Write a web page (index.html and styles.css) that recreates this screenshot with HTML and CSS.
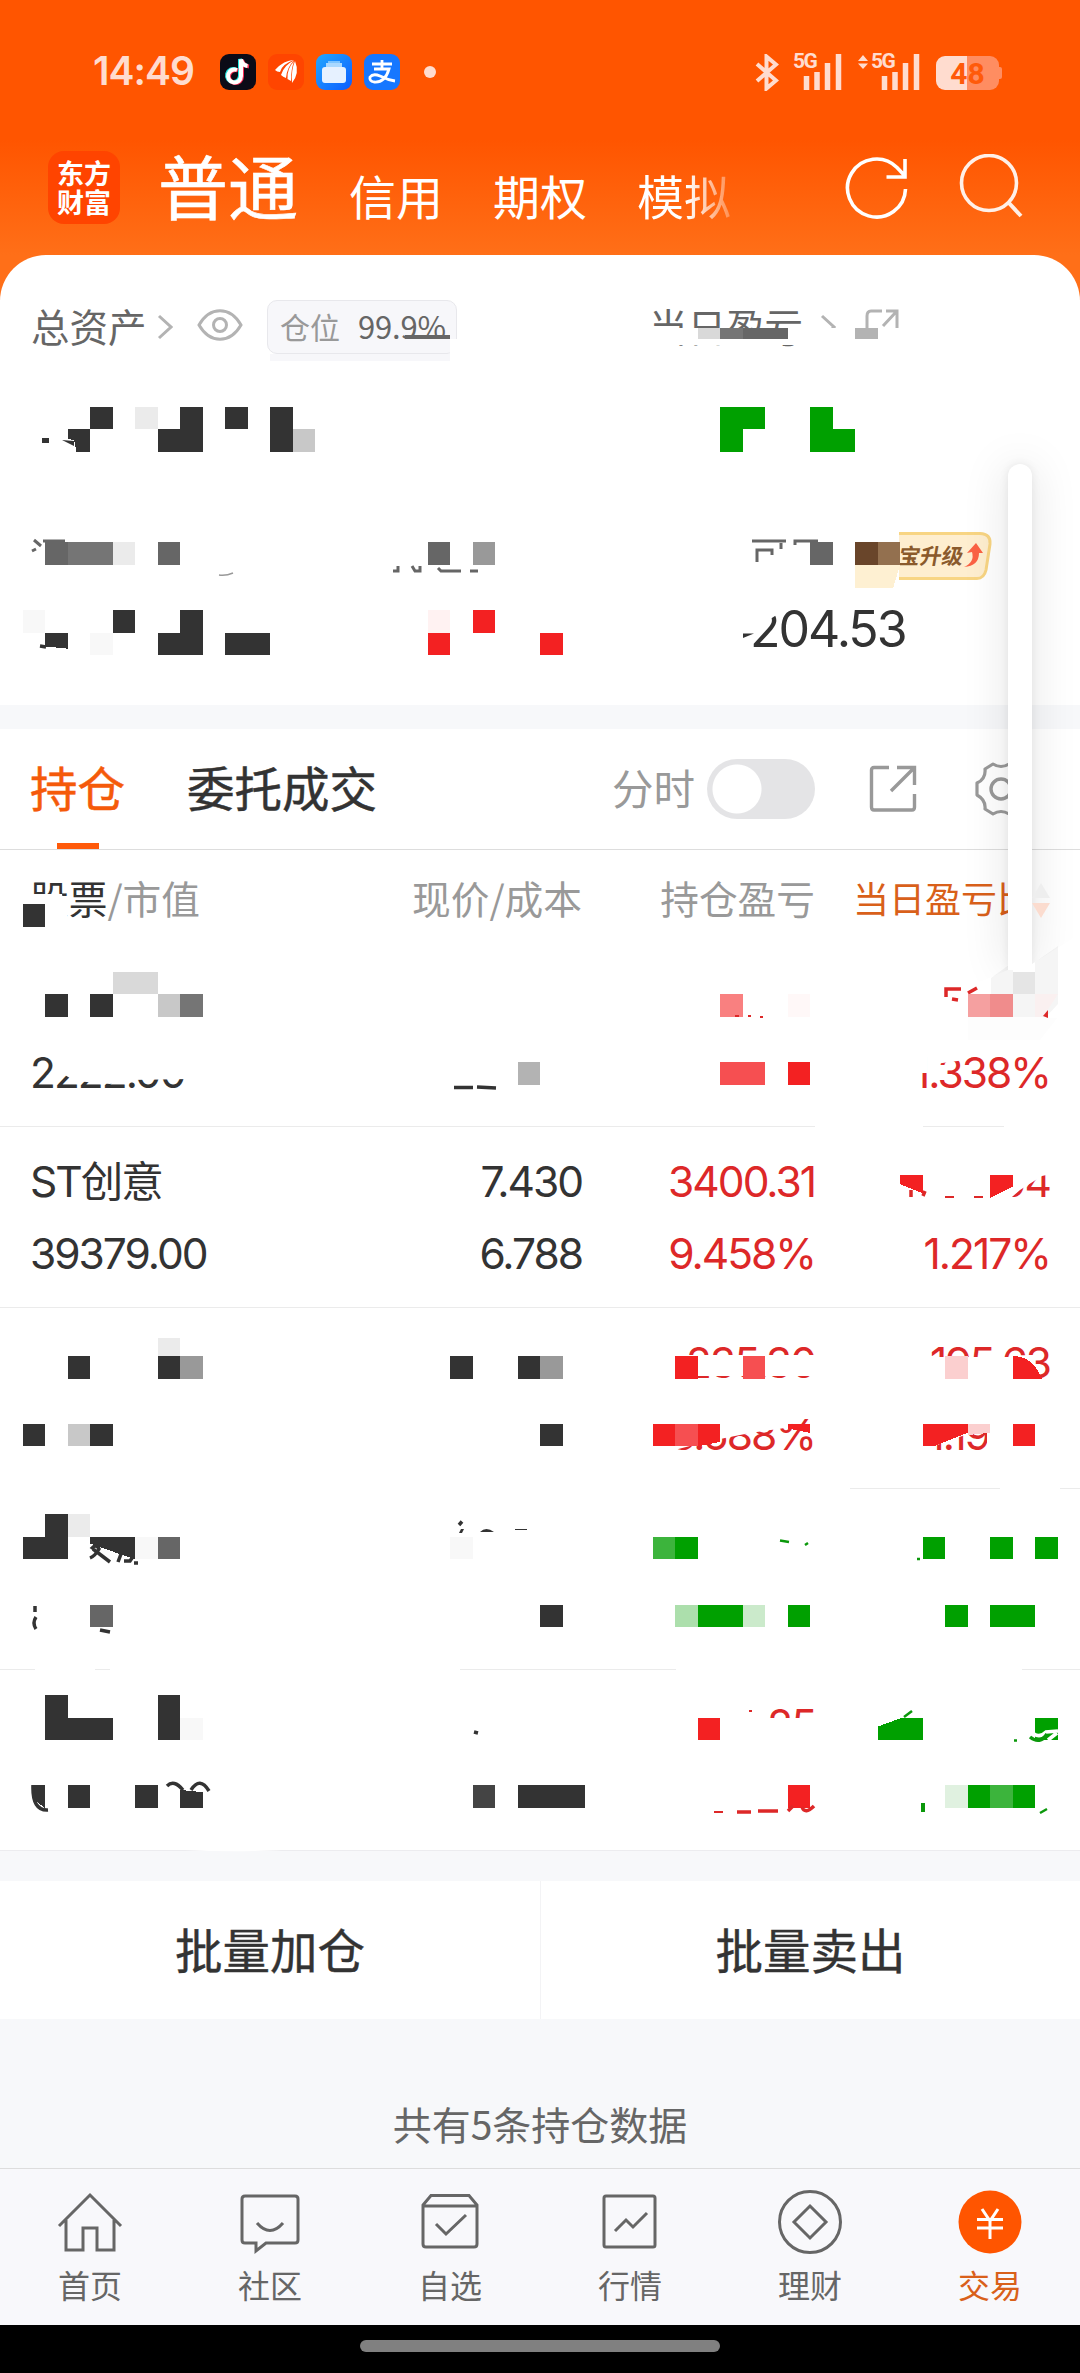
FILE: index.html
```html
<!DOCTYPE html>
<html lang="zh-CN">
<head>
<meta charset="utf-8">
<title>持仓</title>
<link rel="stylesheet" href="styles.css">
</head>
<body>
<div class="app">
  <header class="top">
    <div class="status">
      <span class="clock">14:49</span>
      <span class="apps">
        <svg width="36" height="36" viewBox="0 0 36 36"><rect width="36" height="36" rx="9" fill="#0b0b17"/><g fill="none" stroke-width="4"><path d="M16 15.500a6.500 6.500 0 1 0 4 6V5c1 4 3.500 6 7 6.500" stroke="#25e8e4"/><path d="M18 16.500a6.500 6.500 0 1 0 4 6V6c1 4 3.500 6 7 6.500" stroke="#fa2c55"/><path d="M17 16a6.500 6.500 0 1 0 4 6V5.500c1 4 3 6 6.500 6.500" stroke="#fff"/></g></svg>
        <svg width="36" height="36" viewBox="0 0 36 36"><rect width="36" height="36" rx="9" fill="#ff4500"/><path d="M7 16Q16 6 26 6Q14 10 12 18Q9 18 7 16ZM13 21Q16 11 26 6.500Q19 13 18 24Q15 23 13 21ZM19.500 25Q19 14 26 7.500Q23 15 23 27ZM24 29Q23 16 27 7Q32 19 24 29Z" fill="#fff"/></svg>
        <svg width="36" height="36" viewBox="0 0 36 36"><defs><linearGradient id="blue" x2="1" y2="1"><stop stop-color="#22a7ff"/><stop offset="1" stop-color="#0c5cff"/></linearGradient></defs><rect width="36" height="36" rx="9" fill="url(#blue)"/><path d="M12 7h12v2H12z" fill="#7cc4ff"/><path d="M10 9h16v4H10z" fill="#a9d8ff"/><rect x="6" y="13" width="24" height="16" rx="3" fill="#e6f1ff"/></svg>
        <svg width="36" height="36" viewBox="0 0 36 36"><rect width="36" height="36" rx="9" fill="#1677ff"/><path d="M8 10h20M18 6v9M10 15h15q-4 14-15 13-5-1-4-5 3-4 10-1 8 4 15 5" fill="none" stroke="#fff" stroke-width="2.800"/></svg>
      </span>
      <i class="dot"></i>
      <span class="radio">
        <svg class="bt" width="24" height="37" viewBox="0 0 24 37"><path d="M2 10L21 26.500 11.500 34.500V2.500L21 10.500 2 27" fill="none" stroke="#ffdccf" stroke-width="4"/></svg>
        <span class="sig"><b>5G</b><svg width="39" height="36" viewBox="0 0 39 36"><path d="M3.500 36V22M14 36V18M24.500 36V9M35.500 36V0" stroke="#ffdccf" stroke-width="5.500"/></svg></span>
        <span class="sig second"><svg class="ud" width="10" height="14" viewBox="0 0 10 14"><path d="M0 6 5 0 10 6ZM0 8.500 5 14 10 8.500Z" fill="#ffdccf"/></svg><b>5G</b><svg width="39" height="36" viewBox="0 0 39 36"><path d="M3.500 36V22M14 36V18M24.500 36V9M35.500 36V0" stroke="#ffdccf" stroke-width="5.500"/></svg></span>
        <span class="battery">48</span>
      </span>
    </div>
    <nav class="accounts">
      <span class="logo">东方<br>财富</span>
      <b class="current">普通</b>
      <span>信用</span><span>期权</span><span class="fade">模拟</span>
      <svg class="refresh" width="66" height="66" viewBox="0 0 66 66"><path d="M61.500 34A29 29 0 1 1 53 12.500L61 21M61 4V22H42.500" fill="none" stroke="#fff" stroke-width="3.600"/></svg>
      <svg class="search" width="66" height="66" viewBox="0 0 66 66"><circle cx="30" cy="29" r="27.500" fill="none" stroke="#fff0e8" stroke-width="3.600"/><path d="M49 48 62 62" stroke="#fff0e8" stroke-width="4"/></svg>
    </nav>
  </header>

  <section class="balance">
    <div class="summary">
      <span class="label">总资产</span>
      <svg class="chev" width="16" height="26" viewBox="0 0 16 26"><path d="M2 2 14 13 2 24" fill="none" stroke="#b3b3b3" stroke-width="3"/></svg>
      <svg class="eye" width="46" height="32" viewBox="0 0 46 32"><path d="M2 16C13-3 33-3 44 16 33 35 13 35 2 16Z" fill="none" stroke="#b3b3b3" stroke-width="3"/><circle cx="23" cy="16" r="6.500" fill="none" stroke="#b3b3b3" stroke-width="3"/></svg>
      <span class="ratio"><span>仓位</span><b>99.9%</b></span>
      <span class="label today">当日盈亏</span>
      <svg class="chev2" width="16" height="26" viewBox="0 0 16 26"><path d="M2 2 14 13 2 24" fill="none" stroke="#b3b3b3" stroke-width="3"/></svg>
      <svg class="jump" width="36" height="32" viewBox="0 0 36 32"><path d="M18 3H7Q3 3 3 8V30M19 18 32 4M22 3H33V20" fill="none" stroke="#b3b3b3" stroke-width="3"/></svg>
    </div>
    <div class="upgrade">
      <svg class="badge" width="94" height="48" viewBox="0 0 94 48"><path d="M0 1.500H81Q92 2 91 12L87 38Q85 46.500 78 46.500H0Z" fill="#feeecf"/><path d="M0 1.500H81Q92 2 91 12L87 38Q85 46.500 78 46.500H0" fill="none" stroke="#f8d583" stroke-width="3"/><path d="M65 35Q76 30 73 20L68 21 77 11 84 21 80 21Q80 34 65 35Z" fill="#fb6244"/></svg>
      <em>宝升级</em>
    </div>
    <div class="available">204.53</div>
  </section>

  <section class="holdings">
    <div class="tabs">
      <b class="tab on">持仓</b><b class="tab">委托成交</b>
      <span class="minute">分时</span><i class="switch"></i>
      <svg class="open" width="48" height="48" viewBox="0 0 48 48"><path d="M20 2.500H5Q2.500 2.500 2.500 5V42Q2.500 45 5 45H43Q45.500 45 45.500 42V29M28 2.500H45.500V20M22 26 45 3" fill="none" stroke="#999" stroke-width="3.400"/></svg>
      <svg class="gear" width="56" height="56" viewBox="0 0 56 56"><path d="M20 3Q28 8 36 3L43 7Q44 16 52 20V36Q44 39 43 49L36 53Q28 48 20 53L12 48Q13 39 4 34V22Q13 18 12 8Z" fill="none" stroke="#999" stroke-width="3.200" stroke-linejoin="round"/><circle cx="28" cy="28" r="10" fill="none" stroke="#999" stroke-width="3.400"/></svg>
    </div>
    <div class="grid head"><span><b>股票</b>/市值</span><span>现价/成本</span><span>持仓盈亏</span><span class="sorted">当日盈亏比</span></div>
    <div class="grid row one"><div class="r2 c1">2222.00</div><div class="r2 up c4">1.338%</div></div>
    <div class="grid row"><div>ST创意<br>39379.00</div><div>7.430<br>6.788</div><div class="up">3400.31<br>9.458%</div><div class="up">1733.04<br>1.217%</div></div>
    <div class="grid row"><div></div><div></div><div class="up">235.30<br>13.688%</div><div class="up">195.63<br>1.197%</div></div>
    <div class="grid row"></div>
    <div class="grid row"><div></div><div></div><div class="up">1.25</div></div>
  </section>

  <section class="batch"><span>批量加仓</span><span>批量卖出</span></section>
  <div class="count">共有5条持仓数据</div>

  <nav class="bottom">
    <a><svg width="72" height="72" viewBox="0 0 72 72"><path d="M5 39 36 8 67 39M12 33V63H29V41H43V63H60V33" /></svg>首页</a>
    <a><svg width="72" height="72" viewBox="0 0 72 72"><path d="M11 9H61Q64 9 64 12V53Q64 56 61 56H32L22 64V56H11Q8 56 8 53V12Q8 9 11 9ZM23 36Q36 51 49 36"/></svg>社区</a>
    <a><svg width="72" height="72" viewBox="0 0 72 72"><path d="M17 8.500H55L63 18V57Q63 60 60 60H12Q9 60 9 57V18ZM9 19H63M22 37 32 47 52 28"/></svg>自选</a>
    <a><svg width="72" height="72" viewBox="0 0 72 72"><path d="M12 9H59Q61 9 61 11V58Q61 60 59 60H12Q10 60 10 58V11Q10 9 12 9ZM21 44 32 33 39 40 53 26"/></svg>行情</a>
    <a><svg width="72" height="72" viewBox="0 0 72 72"><circle cx="36" cy="35" r="30.500"/><path d="M36 19 52 35 36 51 20 35Z"/></svg>理财</a>
    <a class="on"><svg width="72" height="72" viewBox="0 0 72 72"><circle class="disc" cx="36" cy="35" r="31.500"/><path class="yen" d="M28 22 36 34 44 22M36 34V52M23 32.500H49M23 41H49"/></svg>交易</a>
  </nav>
  <div class="home"><i></i></div>

  <!-- white strokes that hide part of the figures, and what shows between them -->
  <svg class="cover" width="1080" height="2373" viewBox="0 0 1080 2373">
    <g fill="#fff">
      <path d="M640 328H910V345H640ZM450 339H460V360H450ZM280 356H460V364H280Z"/>
      <path d="M640 620H685V655H640ZM740 600V638L786 609 800 600Z"/>
      <path d="M30 894 62 894 68 930H30ZM62 898 70 898 66 925 60 925Z"/>
      <path d="M53 1050V1068L75 1081 110 1084 130 1080 190 1079V1050ZM910 1050H927V1073H910ZM935 1050H968L965 1060 935 1064Z"/>
      <path d="M890 1160H1060V1172L1042 1176 1020 1190 1005 1203H890Z"/>
      <path d="M680 1355H820V1376H680ZM920 1357H1025V1385H920ZM655 1410H815L785 1428 750 1433 725 1438 690 1446 655 1455ZM900 1410H987V1427L940 1444 925 1448 900 1460ZM987 1410H1060V1460H987Z"/>
      <path d="M715 1700H765V1750H715ZM765 1718H820V1750H765Z"/>
      <path d="M815 1125H923V1128H815ZM1004 1125H1080V1128H1004ZM0 1487H850V1490H0ZM1000 1487H1060V1490H1000ZM35 1668H95V1671H35ZM110 1668H460V1671H110ZM676 1668H1022V1671H676ZM185 1850Q240 1853 300 1849Z"/>
    </g>
    <path d="M270 354H450V361H270Z" fill="#f7f7fa"/>
    <path d="M405 335H450V339H405Z" fill="#666"/>
  </svg>
  <svg class="cover" width="1080" height="2373" viewBox="0 0 48 105" preserveAspectRatio="none" shape-rendering="crispEdges">
    <path fill="#333" d="M4 18h1v1h-1zM8 18h1v2h-2v-1h1zM10 18h1v1h-1zM12 18h1v2h-1zM3 19h1v1h-.6l-.1-.5-.3-.1zM5 27h1v1h-1zM8 27h1v2h-2v-1h1zM2 28h1v.7l-1-.1zM10 28h2v1h-2zM1 40h1v1h-1zM2 44h1v1h-1zM4 44h1v1h-1zM3 60h1v1h-1zM7 60h1v1h-1zM20 60h1v1h-1zM23 60h1v1h-1zM1 63h1v1h-1zM4 63h1v1h-1zM24 63h1v1h-1zM2 67h1v2h-2v-1h1zM4 68h2v1l-2-.7zM24 71h1v1h-1zM2 75h1v1h2v1h-3zM7 75h1v2h-1zM3 79h1v1h-1zM6 79h1v1h-1zM8 79.200l1 .1v.7h-1zM1.400 79h.6v1l-.4-.3zM23 79h3v1h-3z"/>
    <path fill="#444" d="M21 79h1v1h-1z"/>
    <path fill="#666" d="M2 24h1v1h-1zM7 24h1v1h-1zM19 24h1v1h-1zM36 24h1v1h-1zM33 14.500h2v.5h-2zM4 71h1v1h-1zM7 68h1v1h-1z"/>
    <path fill="#757575" d="M3 24h2v1h-2zM32 14.500h1v.5h-1zM8 44h1v1h-1z"/>
    <path fill="#999" d="M21 24h1v1h-1zM8 60h1v1h-1zM24 60h1v1h-1z"/>
    <path fill="#b3b3b3" d="M38 14.500h1v.5h-1zM23 47h1v1h-1z"/>
    <path fill="#c8c8c8" d="M13 19h1v1h-1zM7 44h1v1h-1zM3 63h1v1h-1z"/>
    <path fill="#d9d9d9" d="M31 14.500h1v.5h-1zM5 43h2v1h-2z"/>
    <path fill="#ebebeb" d="M6 18h1v1h-1zM5 24h1v1h-1zM7 59.200h1v.8h-1zM3 67h1v1h-1z"/>
    <path fill="#f8f8f8" d="M1 27h1v1h-1zM4 28h1v1h-1zM6 68h1v1h-1zM20 68h1v1h-1zM8 76h1v1h-1z"/>
    <path fill="#00a000" d="M32 18h2v1h-1v1h-1zM36 18h1v1h1v1h-2zM30 68h1v1h-1zM41 68h1v1h-1zM44 68h1v1h-1zM46 68h1v1h-1zM31 71h2v1h-2zM35 71h1v1h-1zM42 71h1v1h-1zM44 71h2v1h-2zM39 76.400l1.100-.4h.9v1h-2zM46 76h1v1h-1zM43 79h1v1h-1zM45 79h1v1h-1z"/>
    <path fill="#3cb43c" d="M29 68h1v1h-1zM44 79h1v1h-1z"/>
    <path fill="#acdfac" d="M30 71h1v1h-1z"/><path fill="#cbeacb" d="M33 71h1v1h-1z"/><path fill="#e0f1e0" d="M42 79h1v1h-1z"/>
    <path fill="#f32122" d="M21 27h1v1h-1zM19 28h1v1h-1zM24 28h1v1h-1zM35 47h1v1h-1zM40 52h1v.8l-1-.4zM44 52h1v.5l-1 .5zM30 60h1v1h-1zM45 60q.9 0 1.300 1h-1.300zM29 63h1v1h-1zM31 63h1v.8l-1 .2zM35 63h1v.4l-1-.2zM41 63h2v.4l-1.500 .6h-.5zM45 63h1v1h-1zM31 76h1v1h-1zM35 79h1v1h-1z"/>
    <path fill="#f64f51" d="M32 47h2v1h-2zM33 60h1v1h-1zM30 63h1v1h-1z"/>
    <path fill="#f98080" d="M32 44h1v1h-1z"/><path fill="#fbcfcf" d="M42 60h1v1h-1zM43 63h1v.4l-1 .1z"/><path fill="#fff2f2" d="M19 27h1v1h-1z"/><path fill="#fff8f8" d="M35 44h1v1h-1z"/>
    <path fill="#69452a" d="M38 24h1v1h-1z"/><path fill="#93704f" d="M39 24h1v1h-1z"/><path fill="#fef0d2" d="M38 25h2l-.3 1h-1.700z"/>
  </svg>
  <svg class="cover" width="1080" height="2373" viewBox="0 0 1080 2373" fill="none" stroke-width="3.500">
    <path d="M42 438H49V443H42ZM62 440 74 441V446Z" fill="#333"/>
    <g stroke="#333"><path d="M40 646 46 647M454 1087.500H473M477 1087 496 1088M459 1525 462 1521.500M91 1549Q96 1543 99 1549 95 1556 90 1558M93 1549 110 1562M118 1562 121 1554M124 1561H130L132 1558M134 1563H138M35 1606V1612M36 1617Q32 1623 36 1629M100 1630 110 1632M474 1732 478 1733M33 1785Q32 1811 48 1810M167 1786Q174 1779 183 1790M191 1790Q200 1776 209 1791"/></g>
    <path d="M459 1533 461 1529H464L462 1533ZM480 1532Q486 1526 494 1532ZM515 1529H527V1530H515Z" fill="#333"/>
    <g stroke="#666" stroke-width="3"><path d="M34 540 41 546M43 541H65M32 551 36 549M393 571H398V566M412 566 415 571H420V566M438 568 441 571H461M470 571H478M752 541H786M757 562V550H772V555M781 543V549M795 545V541H818" /></g>
    <path d="M219 575Q226 576 233 573" stroke="#999" stroke-width="1.500"/>
    <path d="M743 633.500H754L743 638Z" fill="#333"/>
    <g stroke="#dd2828"><path d="M946 997V989H961M952 999 958 1000M968 993 977 988M911 1197V1190M923 1196 925 1191"/><path stroke-width="2" d="M735 1016H739M748 1016H751M760 1017H763M945 1197H954M974 1197H983M749 1711H752M714 1812H723"/><path d="M737 1812H751M758 1811H778M788 1811 793 1806M802 1807Q805 1815 814 1806"/></g>
    <path d="M1043 1015 1046 1012V1018H1041Z" fill="#dd2828"/>
    <g stroke="#0b980b" stroke-width="2.500"><path d="M780 1540.500 789 1542M805 1545 808 1543M917 1559H920M904 1717 912 1711M1014 1740.500H1017M1040 1813 1047 1809"/><path d="M923 1803V1812" stroke-width="4"/></g>
    <path d="M1034 1734Q1040 1738 1046 1732L1058 1731M1048 1740 1057 1733" stroke="#fff"/><path d="M1030 1737Q1040 1745 1047 1734" stroke="#0b980b"/>
    <g stroke="none"><path d="M1013 962 991 978V1017H1058V946L1031 965Z" fill="#f5f5f5"/><path d="M1013 940H1035V972H1013Z" fill="#fff"/><path d="M1013 972H1035V994H1013Z" fill="#e5e5e5"/><path d="M968 994H990V1017H968Z" fill="#f5a0a0"/><path d="M990 994H1013V1017H990Z" fill="#f08c8c"/><path d="M1035 994H1058L1043 1017H1035Z" fill="#faf0f0"/><path d="M968 1017H1058L1040 1040H968Z" fill="#fdfdfd"/><path d="M1058 1004V1018H1045Z" fill="#fff"/><path d="M1043 1016 1048 1010V1018Z" fill="#dd2828"/></g>
  </svg>
  <div class="float"></div>
  <svg class="sort" width="18" height="36" viewBox="0 0 18 36"><path d="M0 15 9 0 18 15Z" fill="#eee"/><path d="M0 20H18L9 35Z" fill="#fbdccf"/></svg>
</div>
</body>
</html>
```
FILE: styles.css
```css
* { box-sizing: border-box; }
body { margin: 0; font-family: "Noto Sans CJK SC", sans-serif; color: #333; background: #f7f8fa; }
b { font-weight: 400; }
svg { display: block; flex: none; }
.app { position: relative; width: 1080px; height: 2373px; overflow: hidden; display: flex; flex-direction: column; }
.top { height: 300px; margin-bottom: -45px; background: linear-gradient(#ff5500 140px, #ff6f18 255px); flex: none; }
.status { height: 140px; padding: 1px 77px 0 93px; display: flex; align-items: center; color: #ffdccf; line-height: 40px; }
.clock { font: 600 39px/40px Inter, sans-serif; letter-spacing: -1px; width: 127px; white-space: nowrap; }
.apps { display: flex; gap: 12px; margin-top: 3px; }
.dot { width: 12px; height: 12px; border-radius: 6px; background: #ffdccf; margin: 3px 0 0 24px; }
.radio { display: flex; margin: 3px 0 0 auto; padding-right: 4px; height: 37px; }
.bt { margin-right: 14px; }
.sig { display: flex; position: relative; padding-left: 10px; width: 78px; }
.sig b { font: 700 21px/20px "Roboto", sans-serif; letter-spacing: -1.5px; position: absolute; left: 0; top: -3px; }
.sig .ud { position: absolute; left: -13px; top: 1px; }
.sig.second { width: 65px; }
.battery { position: relative; width: 63px; height: 34px; margin-top: 2px; border-radius: 9px; background: linear-gradient(90deg, #ffdccf 50%, #ff8d61 50%); color: #ff5a0a; font: 700 30px/35px "Roboto", sans-serif; text-align: center; }
.battery::after { content: ""; position: absolute; right: -3px; top: 11px; width: 3px; height: 12px; background: #ff8d61; border-radius: 0 2px 2px 0; }
.accounts { height: 92px; padding-left: 48px; display: flex; align-items: flex-start; color: #fff; font-size: 47px; line-height: 60px; margin-top: 10px; }
.logo { width: 72px; height: 73px; border-radius: 16px; background: #ff4400; font-size: 27px; line-height: 29px; font-weight: 700; text-align: center; padding-top: 7px; margin: 1px 38px 0 0; }
.current { font-size: 70px; line-height: 70px; width: 191px; -webkit-text-stroke: .6px #fff; }
.accounts > span:not(.logo) { width: 144px; padding-top: 15px; }
.accounts .fade { background: linear-gradient(90deg, #fff 50px, #ff6a1400 110px); -webkit-background-clip: text; color: transparent; }
.refresh { margin: 5px 0 0 63px; }
.search { margin: 4px 0 0 49px; }
.balance { height: 450px; flex: none; background: #fff; border-radius: 46px 46px 0 0; position: relative; }
.summary { display: flex; align-items: flex-start; padding: 45px 0 0 31px; height: 110px; font-size: 38.5px; line-height: 50px; color: #666; }
.label { width: 115px; white-space: nowrap; }
.chev { margin: 14px 0 0 11px; }
.eye { margin: 9px 0 0 24px; }
.ratio { width: 190px; height: 54px; border: 1px solid #e8e8ec; border-radius: 10px; margin-left: 24px; background: #f7f7fa; padding-left: 12px; font-size: 30px; display: flex; gap: 18px; }
.ratio span { color: #999; }
.ratio b { font-size: 31px; letter-spacing: -.2px; }
.label.today { margin-left: 192px; width: 154px; }
.chev2 { margin: 14px 0 0 17px; }
.jump { margin: 8px 0 0 28px; }
.upgrade { height: 48px; margin: 167px 0 0 899px; position: relative; width: 94px; }
.badge { position: absolute; inset: 0; }
.upgrade em { display: block; position: relative; font-size: 21.5px; line-height: 46px; font-weight: 700; color: #8a5a2c; transform: skewX(-10deg); font-style: normal; }
.available { padding-left: 750px; font: 400 50px/60px Inter, sans-serif; letter-spacing: -2px; margin-top: 19px; }
.holdings { margin-top: 24px; height: 1122px; flex: none; background: #fff; border-bottom: 1px solid #ececef; }
.tabs { height: 121px; border-bottom: 1px solid #ddd; display: flex; padding-left: 30px; align-items: flex-start; font-size: 47.5px; line-height: 60px; }
.tab { padding-top: 28px; height: 120px; -webkit-text-stroke: .5px; margin-right: 62px; }
.tab.on { color: #f55a0a; background: linear-gradient(#ff5a0a, #ff5a0a) 27px 114px / 42px 6px no-repeat; }
.minute { color: #999; font-size: 41.5px; margin: 28px 0 0 173px; }
.switch { width: 108px; height: 60px; margin: 30px 0 0 12px; border-radius: 30px; background: radial-gradient(circle at 30px 30px, #fff 24px, #e4e4e6 25px); }
.open { margin: 36px 0 0 54px; }
.gear { margin: 32px 0 0 56px; }
.grid { display: grid; grid-template-columns: 200px 352px 233px 235px; padding-left: 30px; }
.grid > * { text-align: right; white-space: nowrap; }
.grid > :first-child { text-align: left; }
.head { height: 96px; font-size: 38.7px; line-height: 95px; color: #999; }
.head b { color: #333; }
.head .sorted { color: #d9601a; font-size: 36px; text-align: left; padding-left: 38px; }
.row { height: 181px; padding-top: 19px; border-bottom: 1px solid #ebebeb; font-family: Inter, "Noto Sans CJK SC", sans-serif; font-size: 42.5px; letter-spacing: -2px; line-height: 72px; }
.row > * { height: 144px; }
.row:last-child { border: 0; }
.one .r2 { padding-top: 72px; }
.one .c4 { grid-column: 4; }
.up { color: #dd2828; }
.batch { margin-top: 30px; height: 138px; flex: none; background: #fff; display: grid; grid-template-columns: 1fr 1fr; text-align: center; font-size: 47.5px; -webkit-text-stroke: .4px; line-height: 136px; }
.batch span + span { border-left: 1px solid #f3f3f5; }
.count { height: 149px; flex: none; padding-top: 74px; line-height: 60px; font-size: 39px; color: #666; text-align: center; }
.bottom { height: 157px; flex: none; border-top: 1px solid #ddd; background: #f8f8fb; display: grid; grid-template-columns: repeat(6, 1fr); font-size: 32px; line-height: 44px; color: #666; padding-top: 18px; }
.bottom a { display: flex; flex-direction: column; align-items: center; gap: 3px; }
.bottom svg { fill: none; stroke: #666; stroke-width: 3; }
.bottom .on { color: #d9601a; }
.bottom .disc { fill: #ff5500; stroke: none; }
.bottom .yen { stroke: #fff; }
.home { height: 48px; flex: none; background: #000; padding: 15px 360px; }
.home i { display: block; height: 12px; border-radius: 6px; background: #808080; }
.cover { position: absolute; left: 0; top: 0; pointer-events: none; }
.float { position: absolute; left: 1008px; top: 464px; width: 24px; height: 506px; border-radius: 12px 12px 0 0; background: #fff; box-shadow: 0 0 45px rgba(0, 0, 0, .13), 0 0 10px rgba(0, 0, 0, .08); clip-path: polygon(-80px -80px, 72px -80px, 72px 470px, 24px 500px, 24px 506px, 0 506px, -80px 540px); }
.sort { position: absolute; left: 1032px; top: 883px; }
```
